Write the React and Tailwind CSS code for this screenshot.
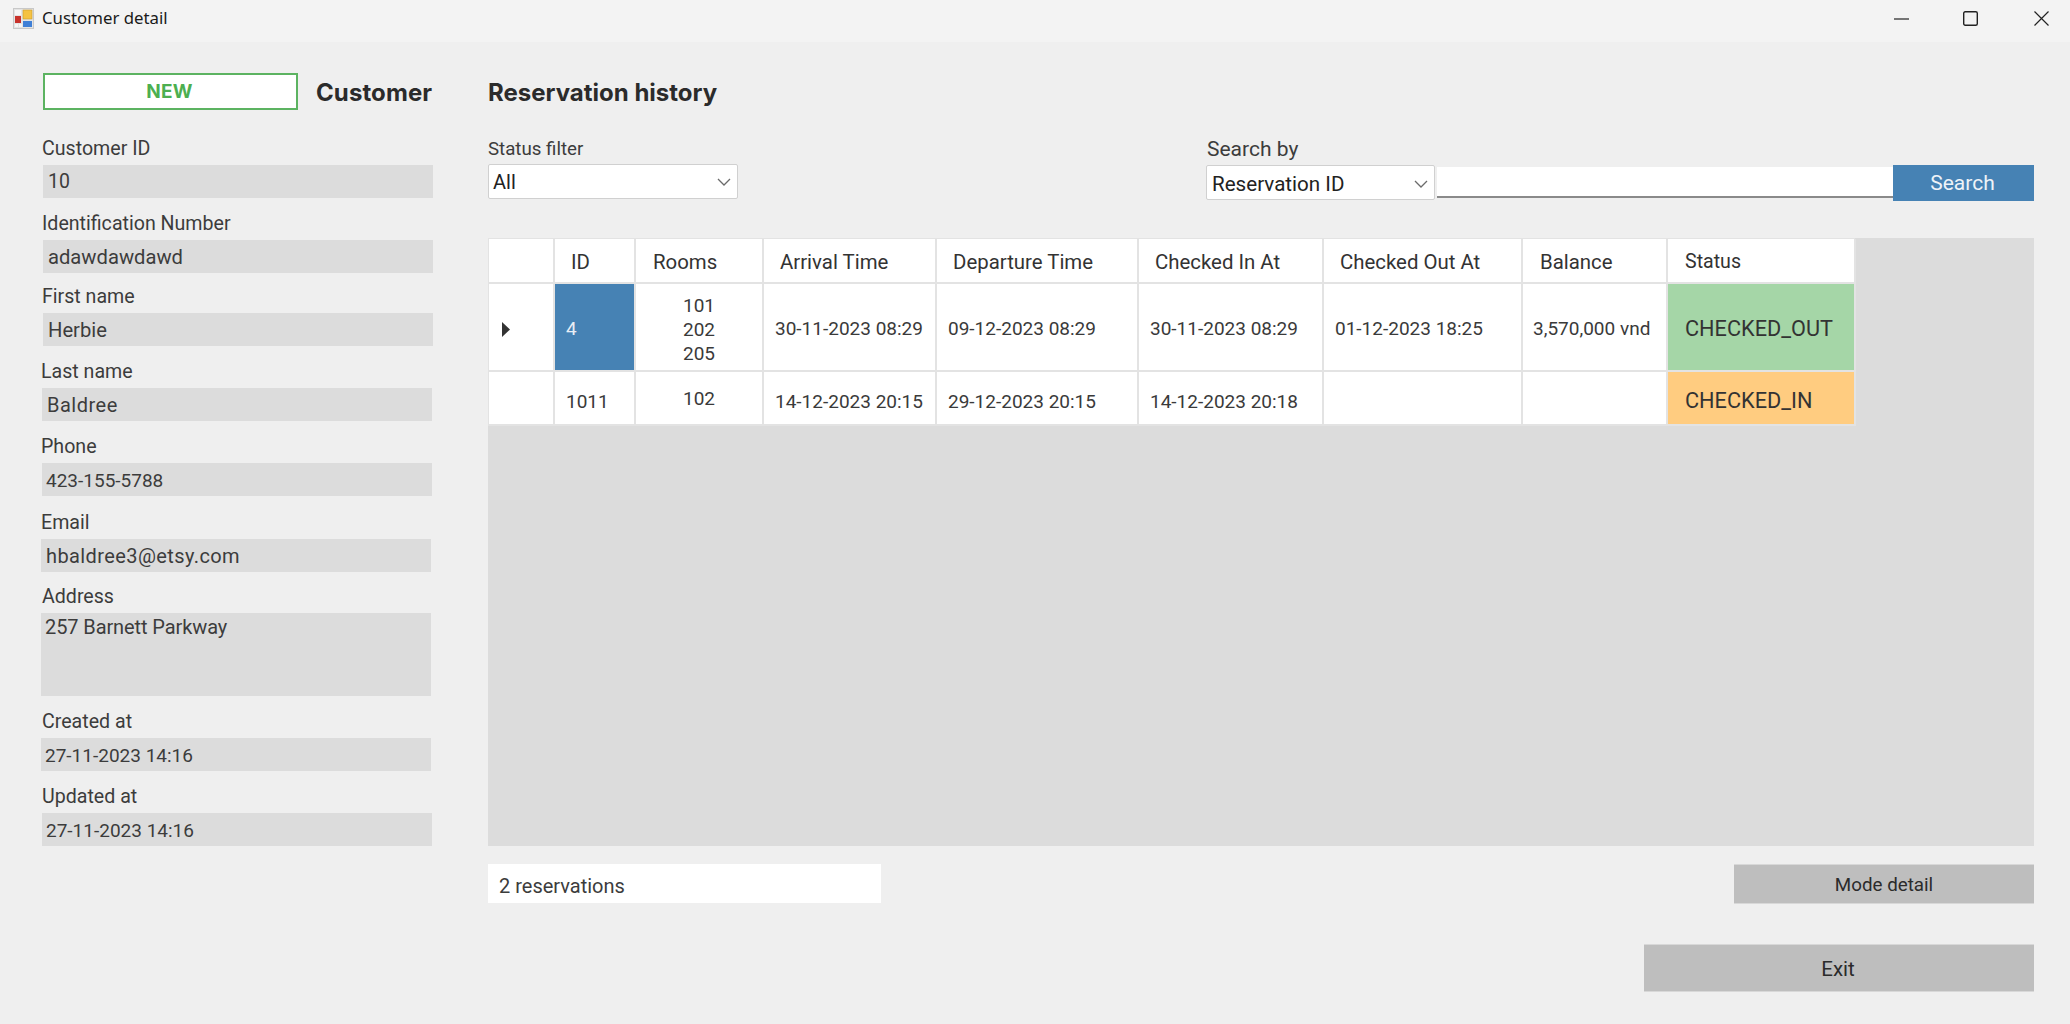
const font = "font-['Roboto','Liberation_Sans',sans-serif]";

const fields = [
  { label: "Customer ID", value: "10", box: "ml-0 h-[33px] pl-[5px] text-[19.5px]", lab: "ml-[-1px]", gap: "mt-[26px]" },
  { label: "Identification Number", value: "adawdawdawd", box: "ml-0 h-[33px] pl-[5px] pt-[1px] text-[20.2px]", lab: "ml-[-1px]", gap: "mt-[13px]" },
  { label: "First name", value: "Herbie", box: "ml-0 h-[33px] pl-[5px] pt-[1px] text-[20.2px]", lab: "ml-[-1px]", gap: "mt-[11px]" },
  { label: "Last name", value: "Baldree", box: "ml-[-1px] h-[33px] pl-[5px] pt-[1px] text-[20px] tracking-[0.5px]", lab: "ml-[-2px]", gap: "mt-[13px]" },
  { label: "Phone", value: "423-155-5788", box: "ml-[-1px] h-[33px] pl-[4px] pt-[3px] text-[19px]", lab: "ml-[-2px]", gap: "mt-[13px]" },
  { label: "Email", value: "hbaldree3@etsy.com", box: "ml-[-2px] h-[33px] pl-[5px] text-[20px] tracking-[0.4px]", lab: "ml-[-2px]", gap: "mt-[14px]" },
  { label: "Address", value: "257 Barnett Parkway", box: "ml-[-2px] h-[83px] pl-[4px] pt-[1px] text-[20px] tracking-[-0.1px]", lab: "ml-[-1px]", gap: "mt-[12px]", top: true },
  { label: "Created at", value: "27-11-2023 14:16", box: "ml-[-2px] h-[33px] pl-[4px] pt-[3px] text-[19px]", lab: "ml-[-1px]", gap: "mt-[13px]" },
  { label: "Updated at", value: "27-11-2023 14:16", box: "ml-[-1px] h-[33px] pl-[4px] pt-[3px] text-[19px]", lab: "ml-[-1px]", gap: "mt-[13px]" },
];

const cols = "grid-cols-[66px_81px_128px_173px_202px_185px_199px_145px_188px]";

const headers = [
  ["", ""],
  ["ID", "pl-[16px] pt-[3px] text-[20.4px]"],
  ["Rooms", "pl-[17px] pt-[3px] text-[20.4px]"],
  ["Arrival Time", "pl-[16px] pt-[3px] text-[20.4px]"],
  ["Departure Time", "pl-[16px] pt-[3px] text-[20.4px]"],
  ["Checked In At", "pl-[16px] pt-[3px] text-[20.4px]"],
  ["Checked Out At", "pl-[16px] pt-[3px] text-[20.4px]"],
  ["Balance", "pl-[17px] pt-[3px] text-[20.4px]"],
  ["Status", "pl-[17px] pt-[3px] text-[19.6px]"],
];

function Cell({ className = "", bg = "bg-white", text = "text-[19px] text-[#3a3a3a]", children }) {
  return (
    <div className={`flex items-center border-r-2 border-b-2 border-[#e3e3e3] ${bg} ${text} ${className}`}>
      {children}
    </div>
  );
}

function Chevron() {
  return (
    <svg width="14" height="8" viewBox="0 0 14 8" fill="none">
      <path d="M1 1l6 6 6-6" stroke="#6b6b6b" strokeWidth="1.3" />
    </svg>
  );
}

function AppIcon() {
  return (
    <svg width="21" height="21" viewBox="0 0 21 21" className="ml-[13px]">
      <rect x="0.5" y="0.5" width="20" height="20" fill="#e4e4e4" stroke="#c8c8c8" />
      <rect x="2" y="2" width="6" height="5" fill="#f6f6f6" />
      <rect x="10" y="2" width="9" height="9" fill="#f5c242" stroke="#c99a2a" strokeWidth="0.6" />
      <rect x="2" y="8" width="6" height="7" fill="#c8322b" />
      <rect x="2" y="16" width="3" height="3" fill="#f6f6f6" />
      <rect x="6" y="16" width="3" height="3" fill="#f6f6f6" />
      <rect x="10" y="13" width="9" height="6" fill="#3f7fd6" />
    </svg>
  );
}

export default function App() {
  return (
    <div className={`flex h-[1024px] w-[2070px] flex-col overflow-hidden bg-[#efefef] ${font}`}>
      {/* title bar */}
      <div className="flex h-[42px] shrink-0 items-center bg-[#f3f3f3] pb-[6px]">
        <AppIcon />
        <span className="ml-[8px] font-['Noto_Sans','Liberation_Sans',sans-serif] text-[16.8px] text-[#1a1a1a]">Customer detail</span>
        <div className="ml-auto flex items-center">
          <svg width="15" height="15" viewBox="0 0 15 15" className="mr-[54px]"><path d="M0 8h15" stroke="#222" strokeWidth="1.2" /></svg>
          <svg width="15" height="15" viewBox="0 0 15 15" className="mr-[56px]"><rect x="0.7" y="0.7" width="13.6" height="13.6" rx="1.5" fill="none" stroke="#222" strokeWidth="1.4" /></svg>
          <svg width="15" height="15" viewBox="0 0 15 15" className="mr-[21px]"><path d="M0.5 0.5l14 14M14.5 0.5l-14 14" stroke="#222" strokeWidth="1.2" /></svg>
        </div>
      </div>

      {/* body */}
      <div className="flex flex-1">
        {/* left column */}
        <div className="ml-[43px] mt-[31px] w-[390px] shrink-0">
          <div className="flex h-[37px] items-center">
            <div className="flex h-[37px] w-[255px] shrink-0 items-center justify-center border-2 border-[#5cb361] bg-white pr-[2px] pt-[1px]">
              <span className="font-['Inter',sans-serif] text-[19px] font-bold tracking-[0.3px] text-[#4caf50]">NEW</span>
            </div>
            <span className="ml-[18px] whitespace-nowrap pt-[2px] font-['Inter',sans-serif] text-[24px] font-bold tracking-[0.1px] text-[#2b2b2b]">Customer</span>
          </div>
          {fields.map((f) => (
            <div key={f.label} className={f.gap}>
              <div className={`h-[24px] text-[19.6px] leading-[26px] text-[#3c3c3c] ${f.lab}`}>{f.label}</div>
              <div className={`mt-[5px] flex w-[390px] bg-[#dcdcdc] text-[#3c3c3c] ${f.top ? "items-start leading-[26px]" : "items-center"} ${f.box}`}>
                {f.value}
              </div>
            </div>
          ))}
        </div>

        {/* right column */}
        <div className="ml-[55px] mt-[31px] w-[1546px] shrink-0">
          <div className="flex h-[37px] items-center pt-[2px] font-['Inter',sans-serif] text-[24px] font-bold text-[#2b2b2b]">Reservation history</div>

          <div className="mt-[26px] flex h-[102px] items-start">
            <div className="w-[717px] shrink-0">
              <div className="h-[24px] text-[18.7px] leading-[26px] text-[#3c3c3c]">Status filter</div>
              <div className="mt-[4px] flex h-[35px] w-[250px] items-center justify-between rounded-[2px] border border-[#d0d0d0] bg-white pl-[4px] pr-[6px] pt-[1px] text-[20px] text-[#222]">
                All
                <Chevron />
              </div>
            </div>
            <div className="flex-1">
              <div className="ml-[2px] h-[24px] text-[21px] leading-[26px] text-[#3c3c3c]">Search by</div>
              <div className="mt-[5px] flex h-[36px] items-start">
                <div className="ml-[1px] flex h-[35px] w-[229px] shrink-0 items-center justify-between rounded-[2px] border border-[#d0d0d0] bg-white pl-[5px] pr-[6px] pt-[3px] text-[20.6px] text-[#222]">
                  Reservation ID
                  <Chevron />
                </div>
                <div className="ml-[2px] mt-[2px] h-[31px] w-[456px] shrink-0 border-b-2 border-[#8a8a8a] bg-white" />
                <div className="flex h-[36px] w-[141px] shrink-0 items-center justify-center bg-[#4682b4] pr-[2px] pt-[2px] text-[21px] text-[#eef3f8]">Search</div>
              </div>
            </div>
          </div>

          {/* table */}
          <div className="h-[608px] bg-[#dcdcdc]">
            <div className={`grid w-[1367px] ${cols} grid-rows-[45px_88px_54px] border-t border-l border-[#e3e3e3]`}>
              {headers.map(([h, c], i) => (
                <Cell key={i} className={c} text="text-[#333]">{h}</Cell>
              ))}

              <Cell className="pl-[13px] pt-[5px]">
                <svg width="8" height="15" viewBox="0 0 8 15"><path d="M0 0l8 7.5-8 7.5z" fill="#333" /></svg>
              </Cell>
              <Cell bg="bg-[#4682b4]" text="text-[19px] text-[#e8eef5]" className="pl-[11px] pt-[4px]">4</Cell>
              <Cell className="justify-center pt-[5px] text-center leading-[24px]">
                <div>101<br />202<br />205</div>
              </Cell>
              <Cell className="pl-[11px] pt-[5px]">30-11-2023 08:29</Cell>
              <Cell className="pl-[11px] pt-[5px]">09-12-2023 08:29</Cell>
              <Cell className="pl-[11px] pt-[5px]">30-11-2023 08:29</Cell>
              <Cell className="pl-[11px] pt-[5px]">01-12-2023 18:25</Cell>
              <Cell className="pl-[10px] pt-[5px] text-[19.3px]">3,570,000 vnd</Cell>
              <Cell bg="bg-[#a5d6a7]" text="text-[21.7px] text-[#333]" className="border-r-0 pl-[17px] pt-[5px]">CHECKED_OUT</Cell>

              <Cell />
              <Cell className="pl-[11px] pt-[8px]">1011</Cell>
              <Cell className="justify-center pt-[3px]">102</Cell>
              <Cell className="pl-[11px] pt-[8px]">14-12-2023 20:15</Cell>
              <Cell className="pl-[11px] pt-[8px]">29-12-2023 20:15</Cell>
              <Cell className="pl-[11px] pt-[8px]">14-12-2023 20:18</Cell>
              <Cell />
              <Cell />
              <Cell bg="bg-[#ffcc80]" text="text-[21.7px] text-[#333]" className="border-r-0 pl-[17px] pt-[6px]">CHECKED_IN</Cell>
            </div>
          </div>

          {/* footer */}
          <div className="mt-[18px] flex h-[40px] items-start justify-between">
            <div className="flex h-[39px] w-[393px] items-center bg-white pl-[11px] pt-[4px] text-[20px] text-[#3c3c3c]">2 reservations</div>
            <div className="flex h-[40px] w-[300px] items-center justify-center border-y border-[#d8d8d8] bg-[#bebebe] pt-[3px] text-[18.8px] text-[#2b2b2b]">Mode detail</div>
          </div>
          <div className="ml-auto mt-[40px] flex h-[48px] w-[390px] items-center justify-center border-y border-[#d8d8d8] bg-[#bebebe] pr-[2px] pt-[2px] text-[20.5px] text-[#2b2b2b]">Exit</div>
        </div>
      </div>
    </div>
  );
}
